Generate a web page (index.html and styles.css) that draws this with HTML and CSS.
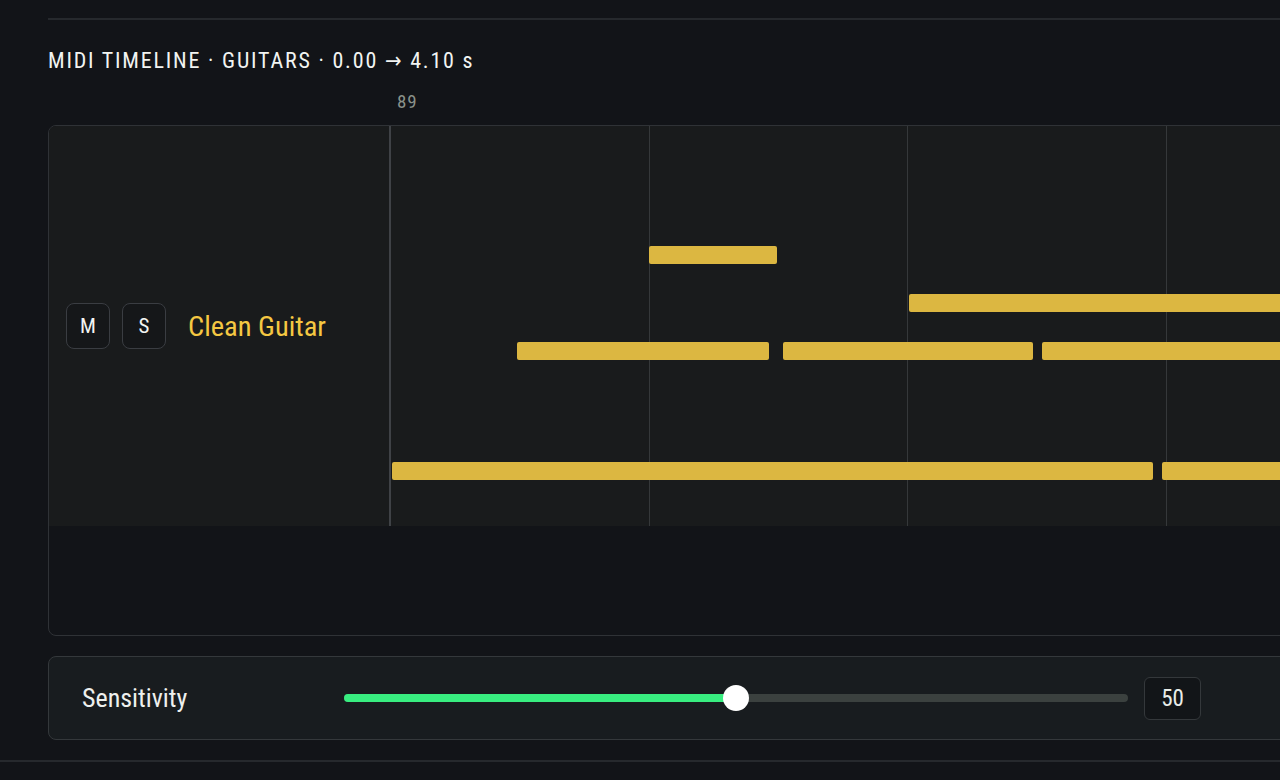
FILE: index.html
```html
<!DOCTYPE html>
<html>
<head>
<meta charset="utf-8">
<link rel="stylesheet" href="styles.css">
</head>
<body>
<div class="page">
  <div class="rule"></div>
  <h1 class="title">MIDI TIMELINE · GUITARS · 0.00 → 4.10 s</h1>
  <div class="ruler"><span class="bar-label">89</span></div>
  <div class="timeline">
    <div class="track">
      <div class="track-head">
        <button class="btn">M</button>
        <button class="btn">S</button>
        <span class="track-name">Clean Guitar</span>
      </div>
      <div class="divider"></div>
      <div class="lane">
        <div class="beat"></div>
        <div class="beat"></div>
        <div class="beat"></div>
        <div class="beat"></div>
        <div class="note" style="left:258px;top:120px;width:128px"></div>
        <div class="note" style="left:518px;top:168px;width:500px"></div>
        <div class="note" style="left:126px;top:216px;width:252px"></div>
        <div class="note" style="left:392px;top:216px;width:250px"></div>
        <div class="note" style="left:651px;top:216px;width:400px"></div>
        <div class="note" style="left:1px;top:336px;width:761px"></div>
        <div class="note" style="left:771px;top:336px;width:400px"></div>
      </div>
    </div>
    <div class="empty"></div>
  </div>
  <div class="settings">
    <span class="label">Sensitivity</span>
    <div class="slider">
      <div class="fill" style="width:50%"></div>
      <div class="thumb" style="left:50%"></div>
    </div>
    <div class="value">50</div>
  </div>
</div>
<div class="bottom-rule"></div>
</body>
</html>
```
FILE: styles.css
```css
html, body {
  margin: 0;
  padding: 0;
  background: #121418;
  overflow: hidden;
  width: 1280px;
  height: 780px;
}
body {
  font-family: "Roboto Condensed", "Liberation Sans Narrow", "DejaVu Sans Condensed", sans-serif;
  color: #f0f2f0;
}
.page {
  padding-left: 48px;
  width: 1400px;
}
.rule {
  margin-top: 18px;
  height: 2px;
  background: #26292d;
}
.title {
  margin: 28px 0 0 0;
  font-size: 22px;
  line-height: 26px;
  font-weight: 400;
  letter-spacing: 1.8px;
  color: #f2f4f2;
}
.ruler {
  height: 51px;
  padding-left: 349px;
  display: flex;
  align-items: center;
  padding-top: 4px;
  box-sizing: border-box;
}
.bar-label {
  font-size: 19px;
  color: #8a928a;
  letter-spacing: 0.8px;
}
.timeline {
  border: 1px solid #2f3236;
  border-radius: 8px;
  overflow: hidden;
  height: 509px;
  display: flex;
  flex-direction: column;
}
.track {
  height: 400px;
  display: flex;
  background: #191b1c;
}
.track-head {
  width: 340px;
  display: flex;
  align-items: center;
  padding-left: 17px;
  box-sizing: border-box;
  gap: 12px;
}
.btn {
  width: 44px;
  height: 46px;
  border: 1.5px solid #3a3d42;
  border-radius: 8px;
  background: #151719;
  color: #f2f4f2;
  font-family: inherit;
  font-size: 21px;
  padding: 0;
}
.track-name {
  margin-left: 10px;
  font-size: 28.5px;
  color: #f5c842;
}
.divider {
  width: 2px;
  background: #3f4246;
}
.lane {
  position: relative;
  flex: 1;
  display: flex;
}
.beat {
  width: 258.67px;
  flex: none;
  border-right: 1px solid #35383a;
  box-sizing: border-box;
}
.note {
  position: absolute;
  height: 18px;
  background: #dcb741;
  border-radius: 2px;
}
.empty {
  flex: 1;
}
.settings {
  margin-top: 20px;
  height: 82px;
  border: 1px solid #34383b;
  border-radius: 8px;
  background: #181c1f;
  display: flex;
  align-items: center;
  padding-left: 33px;
}
.label {
  width: 262px;
  font-size: 26px;
  color: #eef0ee;
}
.slider {
  position: relative;
  width: 784px;
  height: 8px;
  border-radius: 4px;
  background: #3b413f;
}
.fill {
  height: 100%;
  border-radius: 4px;
  background: #38ee80;
}
.thumb {
  position: absolute;
  top: 50%;
  width: 26px;
  height: 26px;
  margin: -13px 0 0 -13px;
  border-radius: 50%;
  background: #ffffff;
}
.value {
  margin-left: 16px;
  width: 55px;
  height: 41px;
  border: 1.5px solid #34383b;
  border-radius: 6px;
  background: #121518;
  display: flex;
  align-items: center;
  justify-content: center;
  font-size: 23px;
  color: #e8ece8;
}
.bottom-rule {
  margin-top: 20px;
  height: 2px;
  background: #26292d;
}
```
